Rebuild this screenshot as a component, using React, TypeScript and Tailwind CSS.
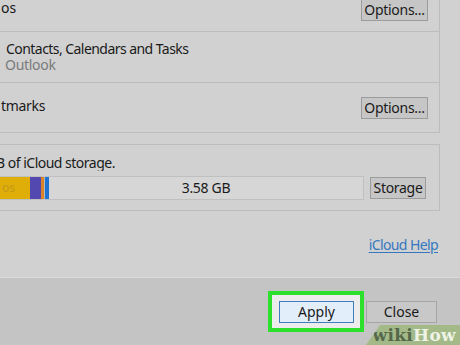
import React from "react";

const font = { fontFamily: '"Noto Sans", "Open Sans", sans-serif' };

function Btn({ children, w }: { children: React.ReactNode; w: string }) {
  return (
    <div
      className={`${w} h-[22px] flex items-center justify-center border border-[#9c9c9c] bg-[#c6c6c6] text-[14px] leading-none tracking-[-0.3px] text-[#1a1a1a]`}
    >
      {children}
    </div>
  );
}

export default function App() {
  return (
    <div
      className="relative w-[460px] h-[345px] overflow-hidden bg-[#d1d1d1] flex flex-col text-[#1a1a1a]"
      style={font}
    >
      {/* content area */}
      <div className="h-[277px] flex flex-col pr-[20px] overflow-hidden">
        {/* panel 1 */}
        <div className="-mt-[31px] -ml-[10px] border border-[#bdbdbd] flex flex-col">
          <div className="h-[62px] border-b border-[#bdbdbd] flex items-end pb-[10px] pr-[11px] pl-[10px]">
            <div className="w-full flex items-center justify-between">
              <span className="text-[14px] leading-[16px] -mt-[4px]">os</span>
              <Btn w="w-[67px]">Options...</Btn>
            </div>
          </div>
          <div className="h-[51px] border-b border-[#bdbdbd] flex flex-col pt-[9px] pl-[15px]">
            <span className="text-[14px] leading-[16px] tracking-[-0.55px]">Contacts, Calendars and Tasks</span>
            <span className="text-[14px] leading-[16px] text-[#7a7a7a] -ml-[1px] tracking-[-0.3px]">Outlook</span>
          </div>
          <div className="h-[49px] flex items-center justify-between pl-[10px] pr-[11px]">
            <span className="text-[14px] leading-[16px] -mt-[4px] tracking-[-0.3px]">tmarks</span>
            <Btn w="w-[67px]">Options...</Btn>
          </div>
        </div>

        {/* panel 2 */}
        <div className="mt-[11px] -ml-[10px] border border-[#bdbdbd] flex flex-col pt-[10px] pb-[10px] pr-[13px]">
          <div className="pl-[10px] overflow-hidden">
            <span className="text-[14px] leading-[16px] block -ml-[5px] tracking-[-0.5px]">B of iCloud storage.</span>
          </div>
          <div className="mt-[5px] flex items-center justify-between">
            <div className="w-[373px] h-[24px] border border-[#c0c0c0] bg-[#d6d6d6] flex">
              <div className="w-[38px] bg-[#dfae08] flex items-center pl-[10px]">
                <span className="text-[12px] leading-none text-[#c39a1a]">os</span>
              </div>
              <div className="w-[11px] bg-[#5347b0]" />
              <div className="w-[3px] bg-[#d9842a]" />
              <div className="w-[1px] bg-[#b9b9b9]" />
              <div className="w-[4px] bg-[#1e73d2]" />
              <div className="flex-1 flex items-center justify-center text-[14px] leading-none tracking-[-0.3px]">
                3.58 GB
              </div>
            </div>
            <Btn w="w-[56px]">Storage</Btn>
          </div>
        </div>

        <div className="mt-[26px] flex justify-end pr-[2px]">
          <span className="text-[14px] leading-[16px] text-[#3578c0] underline underline-offset-[2px] tracking-[-0.6px]">
            iCloud Help
          </span>
        </div>
      </div>

      {/* bottom bar */}
      <div className="flex-1 bg-[#c4c4c4] border-t border-[#dadada] flex justify-end items-start pt-[13px] pr-[23px]">
        <div className="border-[4px] border-[#2ee02e] bg-[#ececec] pl-[7px] pr-[6px] pt-[6px] pb-[5px]">
          <div className="w-[75px] h-[22px] border border-[#3f7dc0] bg-[#e2eef9] flex items-center justify-center text-[14px] leading-none">
            Apply
          </div>
        </div>
        <div className="ml-[2px] mt-[10px] w-[71px] h-[22px] border border-[#a6a6a6] bg-[#c8c8c8] flex items-center justify-center text-[14px] leading-none">
          Close
        </div>
      </div>

      {/* wikiHow watermark */}
      <div
        className="absolute right-0 bottom-0 w-[94px] h-[20px] bg-[#9bb879]/80 flex items-center justify-end pr-[4px]"
        style={{ clipPath: "polygon(14px 0, 100% 0, 100% 100%, 0 100%)" }}
      >
        <span
          className="text-[17px] leading-none font-bold tracking-[0.3px]"
          style={{ fontFamily: '"DejaVu Serif", "Liberation Serif", serif' }}
        >
          <span className="text-[#56684a]">wiki</span>
          <span className="text-[#eef3e6]">How</span>
        </span>
      </div>
    </div>
  );
}
